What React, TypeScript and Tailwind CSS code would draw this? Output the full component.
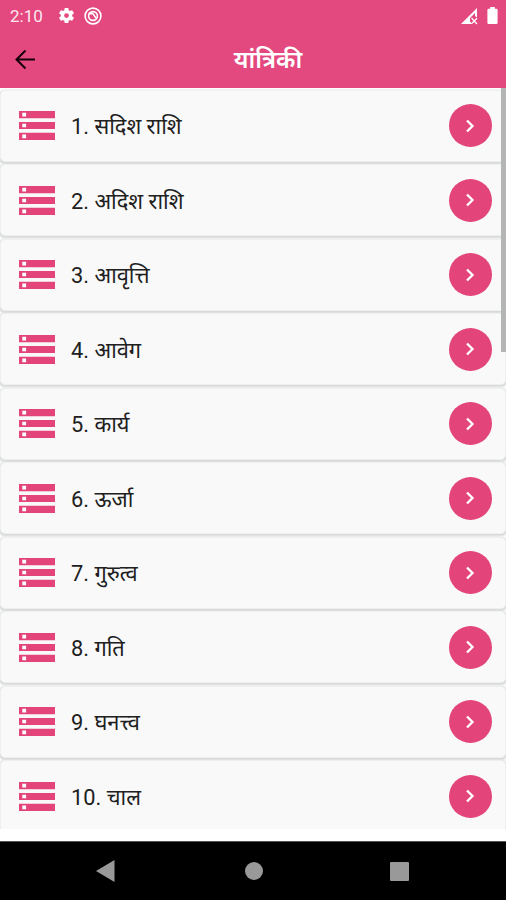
const topics = [
  'सदिश राशि',
  'अदिश राशि',
  'आवृत्ति',
  'आवेग',
  'कार्य',
  'ऊर्जा',
  'गुरुत्व',
  'गति',
  'घनत्त्व',
  'चाल',
];

function StatusBar() {
  return (
    <div className="flex h-8 shrink-0 items-center pl-[10px] pr-[8px] text-white">
      <span className="w-[47px] text-[17px] leading-8 text-[#fde8f0]">2:10</span>
      <svg className="-mt-px h-[19px] w-[19px]" viewBox="0 0 24 24" fill="currentColor">
        <path d="M19.14 12.94c.04-.3.06-.61.06-.94 0-.32-.02-.64-.07-.94l2.03-1.58c.18-.14.23-.41.12-.61l-1.92-3.32c-.12-.22-.37-.29-.59-.22l-2.39.96c-.5-.38-1.03-.7-1.62-.94l-.36-2.54c-.04-.24-.24-.41-.48-.41h-3.84c-.24 0-.43.17-.47.41l-.36 2.54c-.59.24-1.13.57-1.62.94l-2.39-.96c-.22-.08-.47 0-.59.22L2.74 8.87c-.12.21-.08.47.12.61l2.03 1.58c-.05.3-.09.63-.09.94s.02.64.07.94l-2.03 1.58c-.18.14-.23.41-.12.61l1.92 3.32c.12.22.37.29.59.22l2.39-.96c.5.38 1.03.7 1.62.94l.36 2.54c.05.24.24.41.48.41h3.84c.24 0 .44-.17.47-.41l.36-2.54c.59-.24 1.13-.56 1.62-.94l2.39.96c.22.08.47 0 .59-.22l1.92-3.32c.12-.22.07-.47-.12-.61l-2.01-1.58zM12 15a3 3 0 1 1 0-6 3 3 0 0 1 0 6z" />
      </svg>
      <svg className="-mt-px ml-[8px] h-[18px] w-[18px]" viewBox="0 0 18 18" fill="none" stroke="currentColor">
        <circle cx="9" cy="9" r="7.9" strokeWidth="1.6" />
        <circle cx="9" cy="9" r="4.4" strokeWidth="1.6" />
        <path d="M4.6 6.6h4.2l3.4 4.8" strokeWidth="1.6" />
      </svg>
      <svg className="ml-auto h-[17px] w-[17px]" viewBox="0 0 17 17" fill="currentColor">
        <path d="M0 16L16 0V9.5L14 8V5L9 10v3.5L11.5 16z" />
        <path d="M10.5 10l5.5 6M16 10.3l-5 5" stroke="currentColor" strokeWidth="1.3" />
      </svg>
      <svg className="-mt-[2px] ml-[9px] h-[17px] w-[11px]" viewBox="0 0 11 17" fill="currentColor">
        <path d="M3.2 0h4.6v1.8H9.4q1.2 0 1.2 1.2V15.7q0 1.2-1.2 1.2H1.6q-1.2 0-1.2-1.2V3q0-1.2 1.2-1.2h1.6z" />
      </svg>
    </div>
  );
}

function ListIcon() {
  return (
    <svg className="h-[29px] w-[36px] shrink-0" viewBox="0 0 36 29">
      <path d="M0 0h36v7.2H0zM0 10.9h36v7.2H0zM0 21.8h36V29H0z" fill="#e3457b" />
      <path d="M3.3 1.8h3.8v3.6H3.3zM3.3 12.7h3.8v3.6H3.3zM3.3 23.6h3.8v3.6H3.3z" fill="#fff" />
    </svg>
  );
}

function TopicRow({ number, title }: { number: number; title: string }) {
  return (
    <li className="h-[74.55px] shrink-0 pb-[2.55px]">
      <div className="flex h-full items-center rounded-[5px] border border-[#eeefef] bg-[#f9f9f9] pl-[18px] pr-[13.5px] shadow-[0_1px_2px_0.5px_#d8d9d9]">
        <ListIcon />
        <span className="ml-[16px] pt-[3px] text-[21.8px] leading-8 text-[#202020]">
          {number}. {title}
        </span>
        <span className="ml-auto flex h-[43px] w-[43px] items-center justify-center rounded-full bg-[#e3457b]">
          <svg className="h-[14px] w-[10px]" viewBox="0 0 10 14" fill="none" stroke="#fff" strokeWidth="2.3">
            <path d="M2 1.5L7.5 7 2 12.5" />
          </svg>
        </span>
      </div>
    </li>
  );
}

export default function App() {
  return (
    <div className="flex h-[900px] w-[506px] flex-col overflow-hidden bg-white font-['Roboto','Noto_Sans_Devanagari','Noto_Sans',sans-serif]">
      <header className="flex h-[88px] shrink-0 flex-col bg-[#e3487e]">
        <StatusBar />
        <div className="grid h-14 grid-cols-[32px_1fr_32px] items-center">
          <svg className="ml-[15px] h-[20px] w-[20px]" viewBox="0 0 20 20" fill="none" stroke="#150008" strokeWidth="2">
            <path d="M20 9.5H2M10.5.5L1.5 9.5l9 9" />
          </svg>
          <h1 className="pl-[30px] text-center text-[24px] font-semibold leading-8 text-white">यांत्रिकी</h1>
        </div>
      </header>
      <main className="relative h-[741px] shrink-0 overflow-hidden pt-[1.5px]">
        <ul className="flex flex-col">
          {topics.map((title, i) => (
            <TopicRow key={title} number={i + 1} title={title} />
          ))}
        </ul>
        <div className="absolute right-0 top-0 h-[264px] w-[5px] bg-[#b4b5b5]" />
      </main>
      <nav className="mt-[12px] flex grow items-center border-t border-[#555] bg-black pl-[96px] pr-[97px]">
        <svg className="h-[22px] w-[19px]" viewBox="0 0 19 22" fill="#999">
          <path d="M0 11L18.5 0v22z" />
        </svg>
        <span className="ml-[130px] h-[18px] w-[18px] rounded-full bg-[#999]" />
        <span className="ml-auto h-[19px] w-[19px] rounded-[1px] bg-[#999]" />
      </nav>
    </div>
  );
}
